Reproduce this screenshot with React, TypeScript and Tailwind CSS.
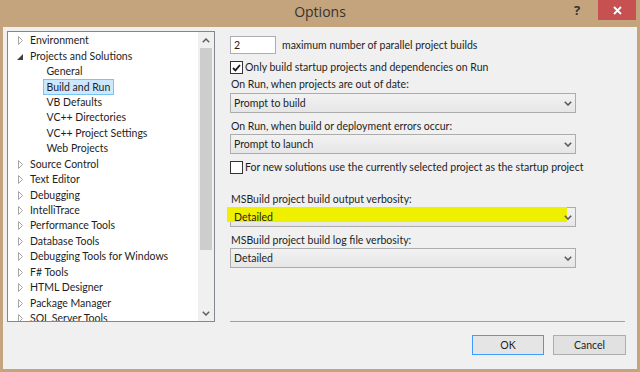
import { useState } from "react";

type TreeItem = {
  label: string;
  level: 0 | 1;
  expanded?: boolean;
  selected?: boolean;
};

const TREE: TreeItem[] = [
  { label: "Environment", level: 0 },
  { label: "Projects and Solutions", level: 0, expanded: true },
  { label: "General", level: 1 },
  { label: "Build and Run", level: 1, selected: true },
  { label: "VB Defaults", level: 1 },
  { label: "VC++ Directories", level: 1 },
  { label: "VC++ Project Settings", level: 1 },
  { label: "Web Projects", level: 1 },
  { label: "Source Control", level: 0 },
  { label: "Text Editor", level: 0 },
  { label: "Debugging", level: 0 },
  { label: "IntelliTrace", level: 0 },
  { label: "Performance Tools", level: 0 },
  { label: "Database Tools", level: 0 },
  { label: "Debugging Tools for Windows", level: 0 },
  { label: "F# Tools", level: 0 },
  { label: "HTML Designer", level: 0 },
  { label: "Package Manager", level: 0 },
  { label: "SQL Server Tools", level: 0 },
];

function Expander({ expanded }: { expanded?: boolean }) {
  if (expanded) {
    return (
      <svg width="6" height="6" viewBox="0 0 6 6" className="mt-[1px]">
        <path d="M6 0 L6 6 L0 6 Z" fill="#404040" />
      </svg>
    );
  }
  return (
    <svg width="5" height="9" viewBox="0 0 5 9">
      <path d="M0.5 0.5 L4.5 4.5 L0.5 8.5 Z" fill="none" stroke="#a6a6a6" strokeWidth="1" />
    </svg>
  );
}

function Chevron() {
  return (
    <svg width="8" height="5" viewBox="0 0 8 5">
      <path d="M0.8 0.8 L4 4 L7.2 0.8" fill="none" stroke="#5a5a5a" strokeWidth="1.6" />
    </svg>
  );
}

function ScrollArrow({ up }: { up?: boolean }) {
  return (
    <svg width="8" height="5" viewBox="0 0 8 5">
      <path
        d={up ? "M0.8 4.2 L4 1 L7.2 4.2" : "M0.8 0.8 L4 4 L7.2 0.8"}
        fill="none"
        stroke="#606060"
        strokeWidth="1.5"
      />
    </svg>
  );
}

function Combo({ value, highlight }: { value: string; highlight?: boolean }) {
  return (
    <div className="relative flex h-[20px] w-[346px] items-center justify-between border border-[#acacac] bg-gradient-to-b from-[#f2f2f2] to-[#e6e6e6] pr-[3px] pl-[3px]">
      {highlight && (
        <div className="absolute top-[-1px] left-[-4px] h-[15px] w-[340px] bg-[#efef00]" />
      )}
      <span className="relative text-[#1e1e1e]">{value}</span>
      <span className="relative">
        <Chevron />
      </span>
    </div>
  );
}

function Check({ checked }: { checked?: boolean }) {
  return (
    <div className="flex h-[13px] w-[13px] shrink-0 items-center justify-center border border-[#333333] bg-white">
      {checked && (
        <svg width="9" height="8" viewBox="0 0 9 8">
          <path d="M1 4 L3.4 6.4 L8 1" fill="none" stroke="#1a1a1a" strokeWidth="1.8" />
        </svg>
      )}
    </div>
  );
}

export default function App() {
  const [parallel, setParallel] = useState("2");

  return (
    <div className="flex h-[372px] w-[640px] flex-col bg-[#c4a47c] font-['Lato',sans-serif] text-[10.5px] leading-[15px] text-[#1e1e1e]">
      <header className="relative flex h-[27px] shrink-0 items-start justify-center">
        <span className="mt-[3px] font-['Open_Sans',sans-serif] text-[14px] leading-[18px] text-[#333333]">
          Options
        </span>
        <span className="absolute top-[2px] left-[574px] font-['Open_Sans',sans-serif] text-[13px] font-bold leading-[16px] text-[#333333]">
          ?
        </span>
        <button className="absolute top-0 right-[4px] flex h-[20px] w-[38px] items-center justify-center bg-[#c75050]">
          <svg width="9" height="9" viewBox="0 0 9 9">
            <path d="M1 1 L8 8 M8 1 L1 8" stroke="white" strokeWidth="1.8" />
          </svg>
        </button>
      </header>

      <div className="mx-[3px] mb-[3px] flex flex-1 bg-[#f0f0f0] pt-[4px] pr-[11px] pl-[4px]">
        <aside className="flex h-[291px] w-[208px] shrink-0 border border-[#828790] bg-white">
          <ul className="flex-1 overflow-hidden pt-[1px]">
            {TREE.map((item) => (
              <li key={item.label} className="flex h-[15.45px] items-center whitespace-nowrap">
                {item.level === 0 ? (
                  <>
                    <span className="flex w-[22px] shrink-0 justify-end pr-[7px]">
                      <Expander expanded={item.expanded} />
                    </span>
                    <span>{item.label}</span>
                  </>
                ) : (
                  <span
                    className={
                      item.selected
                        ? "ml-[35px] flex h-[16px] items-center border border-[#7ac3f5] bg-[#cce8ff] pr-[3px] pl-[2.5px]"
                        : "ml-[38.5px]"
                    }
                  >
                    {item.label}
                  </span>
                )}
              </li>
            ))}
          </ul>
          <div className="flex w-[16px] shrink-0 flex-col items-center bg-[#f0f0f0]">
            <div className="flex h-[16px] items-center justify-center">
              <ScrollArrow up />
            </div>
            <div className="h-[202px] w-[12px] bg-[#cdcdcd]" />
            <div className="flex-1" />
            <div className="flex h-[16px] items-center justify-center">
              <ScrollArrow />
            </div>
          </div>
        </aside>

        <main className="ml-[15px] flex min-w-0 flex-1 flex-col pt-[5px] pb-[14px]">
          <div className="flex items-center">
            <input
              value={parallel}
              onChange={(e) => setParallel(e.target.value)}
              className="h-[18px] w-[46px] border border-[#abadb3] bg-white px-[3px] outline-none"
            />
            <span className="ml-[6px]">maximum number of parallel project builds</span>
          </div>

          <label className="mt-[6px] flex h-[15px] items-center gap-[2px]">
            <Check checked />
            <span>Only build startup projects and dependencies on Run</span>
          </label>

          <p className="mt-[2px] pl-[1px]">On Run, when projects are out of date:</p>
          <div className="mt-[1px]">
            <Combo value="Prompt to build" />
          </div>

          <p className="mt-[6px] pl-[1px]">On Run, when build or deployment errors occur:</p>
          <Combo value="Prompt to launch" />

          <label className="mt-[6px] flex h-[15px] items-center gap-[2px] whitespace-nowrap">
            <Check />
            <span>For new solutions use the currently selected project as the startup project</span>
          </label>

          <p className="mt-[17px] pl-[1px]">MSBuild project build output verbosity:</p>
          <Combo value="Detailed" highlight />

          <p className="mt-[6px] pl-[1px]">MSBuild project build log file verbosity:</p>
          <Combo value="Detailed" />

          <div className="flex-1" />
          <div className="h-px w-[395px] bg-[#a0a0a0]" />

          <div className="mt-[13px] flex justify-end gap-[9px]">
            <button className="h-[20px] w-[72px] border border-[#3c9cff] bg-[#e5e5e5]">OK</button>
            <button className="h-[20px] w-[73px] border border-[#adadad] bg-[#e1e1e1]">Cancel</button>
          </div>
        </main>
      </div>
    </div>
  );
}
